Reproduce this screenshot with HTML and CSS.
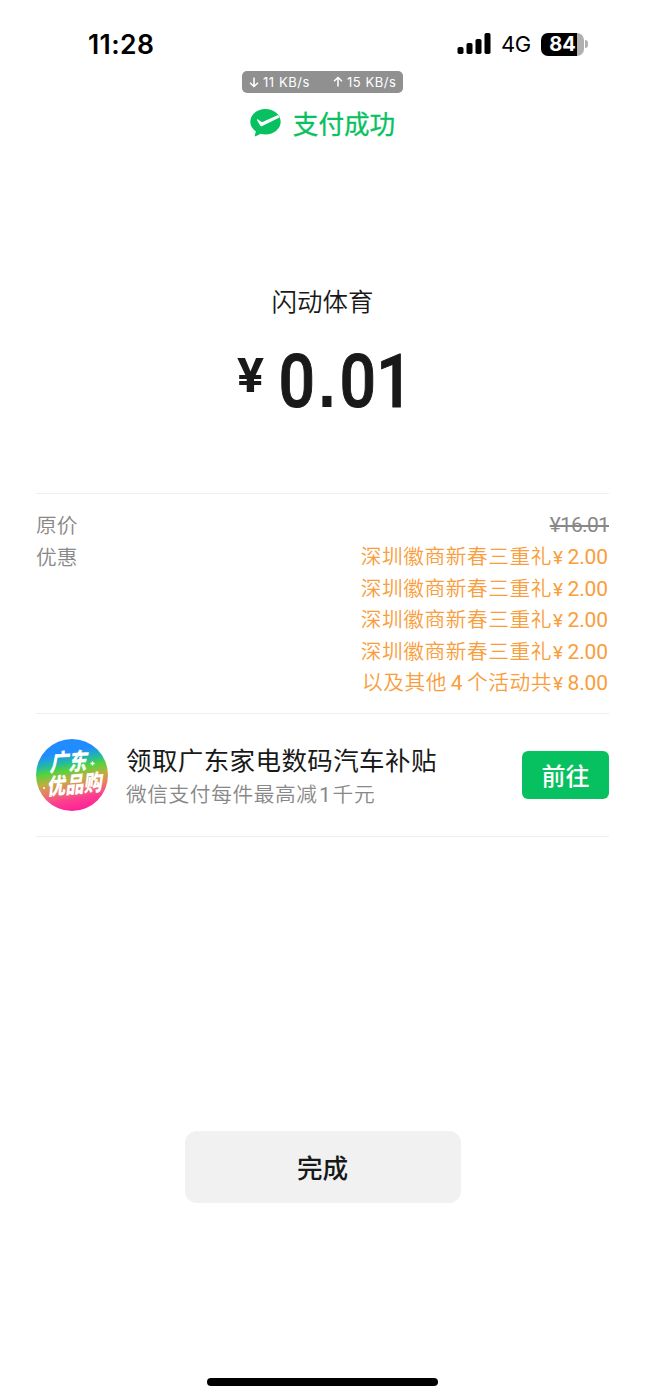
FILE: index.html
```html
<!DOCTYPE html>
<html lang="zh-CN">
<head>
<meta charset="utf-8">
<title>支付成功</title>
<link rel="stylesheet" href="styles.css">
</head>
<body>
<header class="status">
  <span class="clock">11:28</span>
  <div class="status-right">
    <svg class="signal" width="34" height="22" viewBox="0 0 34 22"><rect x="0.500" y="14" width="6" height="7" rx="1.8"/><rect x="9.500" y="10" width="6" height="11" rx="1.8"/><rect x="18.500" y="6" width="6" height="15" rx="1.8"/><rect x="27.500" y="0" width="6" height="21" rx="1.8"/></svg>
    <span class="network">4G</span>
    <div class="battery"><span class="level">84</span></div><span class="nub"></span>
  </div>
</header>
<div class="speed">
  <svg width="10" height="12" viewBox="0 0 10 12"><path d="M5 1.5V10.5M1 6.7L5 10.5L9 6.7"/></svg><span class="down">11 KB/s</span>
  <svg width="10" height="12" viewBox="0 0 10 12"><path d="M5 10.5V1.5M1 5.3L5 1.5L9 5.3"/></svg><span>15 KB/s</span>
</div>
<div class="result">
  <svg width="31" height="28" viewBox="0 0 31 28"><path fill="#07c160" d="M15.5 0C7 0 .3 5.6.3 12.7c0 4 2.2 7.5 5.600 9.800L4.700 26.500c-.1.7.4 1 1 .7l5-2.500c1.500.5 3.100.7 4.800.7 8.400 0 15.200-5.700 15.200-12.700S23.900 0 15.500 0z"/><path fill="#fff" d="M11.700 17.200C11.100 17.500 10.600 17.300 10.300 16.800L7 11.200C6.800 10.500 7.400 10 8 10.400L11.200 12.700C11.800 13.100 12.400 13.100 13.100 12.800L28 6L29.500 8.600Z"/></svg>
  <span>支付成功</span>
</div>
<main>
  <h1 class="merchant">闪动体育</h1>
  <div class="amount"><svg width="180" height="70" viewBox="0 0 180 70"><text class="yen" x="3" y="46" textLength="27" lengthAdjust="spacingAndGlyphs">¥</text><text class="number" transform="translate(44.500 60.500) scale(.87 1)" x="0 45.500 70 112.500">0<tspan class="point">.</tspan>01</text></svg></div>
  <section class="details">
    <div class="row"><span>原价</span><del>¥16.01</del></div>
    <div class="row"><span>优惠</span>
      <div class="offers">
        <p>深圳徽商新春三重礼<b>¥</b><i>2.00</i></p>
        <p>深圳徽商新春三重礼<b>¥</b><i>2.00</i></p>
        <p>深圳徽商新春三重礼<b>¥</b><i>2.00</i></p>
        <p>深圳徽商新春三重礼<b>¥</b><i>2.00</i></p>
        <p>以及其他<em>4</em>个活动共<b>¥</b><i>8.00</i></p>
      </div>
    </div>
  </section>
  <section class="promo">
    <svg class="logo" width="72" height="72" viewBox="0 0 72 72">
      <defs><linearGradient id="rainbow" x1=".4" y1="0" x2=".6" y2="1"><stop offset=".18" stop-color="#218cff"/><stop offset=".32" stop-color="#22bba0"/><stop offset=".42" stop-color="#55d33c"/><stop offset=".56" stop-color="#c0ad40"/><stop offset=".68" stop-color="#e88066"/><stop offset=".83" stop-color="#fc3e91"/><stop offset="1" stop-color="#ff1f97"/></linearGradient></defs>
      <circle cx="36" cy="36" r="36" fill="url(#rainbow)"/>
      <g class="logo-text"><text transform="translate(13.500 32.500) rotate(-3) skewX(-14) scale(.86 1.100)">广东</text><text transform="translate(11 56) rotate(-5) skewX(-12) scale(.86 1.050)">优品购</text></g>
      <path d="M54.500 24.500h4M56.500 22.500v4M7 49h2" stroke="#fff" stroke-width="1.300"/>
    </svg>
    <div class="promo-text"><h2>领取广东家电数码汽车补贴</h2><p>微信支付每件最高减<em>1</em>千元</p></div>
    <button class="go">前往</button>
  </section>
</main>
<button class="done">完成</button>
<div class="home"></div>
</body>
</html>
```

FILE: styles.css
```css
* { box-sizing: border-box; }
body { margin: 0; width: 645px; height: 1398px; background: #fff; color: #191919; display: flex; flex-direction: column; align-items: center; overflow: hidden; font-family: Roboto, "Noto Sans CJK SC", sans-serif; }
h1, h2, p { margin: 0; font-weight: 400; }
button { border: 0; padding: 0; font-family: inherit; }
.status { width: 100%; height: 71px; padding: 17px 57px 0 88px; display: flex; justify-content: space-between; align-items: flex-start; color: #000; }
.clock { font: 600 26.500px/54px Inter, sans-serif; letter-spacing: .4px; }
.status-right { height: 54px; display: flex; align-items: center; }
.signal { margin-right: 10px; }
.network { width: 40px; font: 400 22px/54px Inter, sans-serif; letter-spacing: -.4px; }
.battery { width: 43px; height: 23px; border-radius: 7px; overflow: hidden; background: linear-gradient(90deg, #000 36px, #b0b0b0 36px); }
.level { display: block; width: 43px; text-align: center; color: #fff; font: 700 20px/23px Inter, sans-serif; }
.nub { width: 3px; height: 8px; margin-left: 1px; border-radius: 0 4px 4px 0; background: #b0b0b0; }
.speed { width: 161px; height: 22px; border-radius: 5px; background: #909090; color: #fff; display: flex; align-items: center; padding-left: 7px; gap: 4px; font: 400 13px/22px Inter, sans-serif; letter-spacing: .55px; white-space: nowrap; }
.speed svg { flex: none; fill: none; stroke: #fff; stroke-width: 1.5; }
.down { width: 66px; }
.result { height: 36px; margin-top: 12px; display: flex; align-items: center; gap: 12px; color: #07c160; font: 400 25.600px/36px "Noto Sans CJK SC", sans-serif; }
.result span { -webkit-text-stroke: .3px #07c160; }
main { width: 573px; margin-top: 141px; display: flex; flex-direction: column; }
.merchant { height: 36px; text-align: center; font: 350 25.500px/36px "Noto Sans CJK SC", sans-serif; }
.amount { height: 175px; padding: 28px 0 0 198px; }
.amount svg { display: block; overflow: visible; }
.amount text { fill: #191919; font-family: Roboto, sans-serif; }
.yen { font-size: 49px; font-weight: 700; }
.number { font-size: 74px; font-weight: 500; stroke: #191919; stroke-width: 1px; }
.point { font-family: "Liberation Sans", sans-serif; font-weight: 700; stroke: none; }
.details { height: 220px; border-top: 1px solid #eee; padding-top: 15px; font: 350 20.700px/31.500px "Noto Sans CJK SC", sans-serif; color: #888; }
.row { display: flex; justify-content: space-between; }
.row del { font-family: Roboto, sans-serif; font-size: 21px; font-weight: 400; line-height: 33px; height: 31.500px; letter-spacing: -.75px; text-decoration-thickness: 1.500px; }
.offers { color: #fa9d3b; text-align: right; letter-spacing: .550px; white-space: nowrap; margin: -.5px 1px 0 0; }
.offers p { height: 31.500px; font-weight: 350; }
.offers b, .offers i { font: 400 21px/31px Roboto, sans-serif; letter-spacing: 0; }
.offers b { font-size: 19px; display: inline-block; width: 15px; padding-left: 1px; text-align: left; }
.offers i { display: inline-block; width: 41px; letter-spacing: -.1px; }
.offers em { display: inline-block; width: 20px; text-align: center; font: 400 21px/31px Roboto, sans-serif; }
.promo { height: 124px; border: solid #eee; border-width: 1px 0; display: flex; align-items: center; }
.logo { margin-right: 18px; }
.logo-text { fill: #fff; font: 900 21.500px "Noto Sans CJK SC", sans-serif; }
.promo-text { flex: 1; white-space: nowrap; font-family: "Noto Sans CJK SC", sans-serif; }
.promo h2 { font-size: 25.500px; line-height: 36px; letter-spacing: .4px; }
.promo p { font-size: 20.700px; font-weight: 350; line-height: 30px; letter-spacing: .600px; color: #888; position: relative; top: .5px; }
.promo em { display: inline-block; width: 15px; text-align: center; font: 400 21px/30px Roboto, sans-serif; }
.go { width: 87px; height: 48px; border-radius: 6px; background: #07c160; color: #fff; font: 500 24px/48px "Noto Sans CJK SC", sans-serif; }
.done { width: 276px; height: 72px; margin-top: 294px; border-radius: 12px; background: #f1f1f1; color: #191919; font: 500 25.600px/72px "Noto Sans CJK SC", sans-serif; }
.home { width: 231px; height: 8px; margin-top: 175px; border-radius: 4px; background: #000; }
```
